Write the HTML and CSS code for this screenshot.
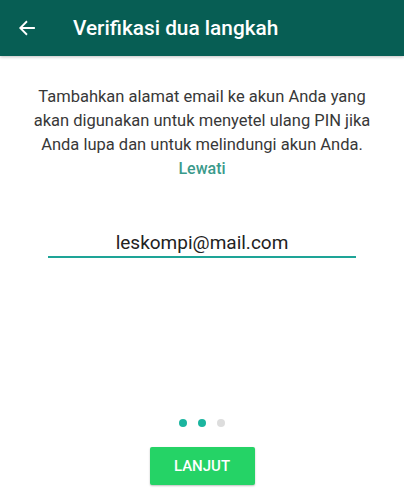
FILE: index.html
```html
<!DOCTYPE html>
<html lang="id">

<head>
    <meta charset="UTF-8">
    <meta name="viewport" content="width=device-width, initial-scale=1.0">
    <title>Verifikasi dua langkah</title>
    <link rel="stylesheet" href="styles.css">
</head>

<body>
    <div class="app">
        <div class="toolbar">
            <button class="back" aria-label="Kembali">
                <svg width="18" height="18" viewBox="0 0 16 16">
                    <path d="M15 8H2M8 2L2 8l6 6" fill="none" stroke="#fff" stroke-width="1.6" />
                </svg>
            </button>
            <h1 class="title">Verifikasi dua langkah</h1>
        </div>

        <div class="content">
            <p class="desc">Tambahkan alamat email ke akun Anda yang akan digunakan untuk menyetel ulang PIN jika Anda lupa dan untuk melindungi akun Anda.</p>
            <a class="skip" href="#">Lewati</a>

            <div class="field">
                <input class="email" type="text" value="leskompi@mail.com">
            </div>
        </div>

        <div class="footer">
            <div class="dots">
                <span class="dot on"></span>
                <span class="dot on"></span>
                <span class="dot"></span>
            </div>
            <button class="next-btn">LANJUT</button>
        </div>
    </div>
</body>

</html>
```

FILE: styles.css
```css
* {
    font-family: Roboto, "Noto Sans", Arial, sans-serif;
    box-sizing: border-box;
}

:root {
    --color-dark: #075e54;
    --color-teal: #3a9a8b;
    --color-line: #1ea497;
    --color-green: #25d366;
}

body {
    margin: 0;
    background-color: #fff;
}

.app {
    display: flex;
    flex-direction: column;
    height: 497px;
}

.toolbar {
    display: flex;
    align-items: center;
    height: 56px;
    background-color: var(--color-dark);
    box-shadow: 0 1px 3px rgba(0, 0, 0, .25);
    padding-left: 18px;
}

.back {
    display: flex;
    background: none;
    border: 0;
    padding: 0;
    margin-right: 37px;
}

.title {
    margin: 0;
    color: #fff;
    font-size: 20.8px;
    font-weight: 500;
}

.content {
    flex: 1;
    display: flex;
    flex-direction: column;
    align-items: center;
    padding-top: 29px;
}

.desc {
    margin: 0;
    width: 356px;
    text-align: center;
    font-size: 16.5px;
    line-height: 24px;
    color: #383838;
}

.skip {
    color: var(--color-teal);
    font-size: 16px;
    font-weight: 500;
    line-height: 24px;
    text-decoration: none;
}

.field {
    margin-top: 50px;
    width: 308px;
    border-bottom: 2px solid var(--color-line);
}

.email {
    width: 100%;
    border: 0;
    outline: none;
    padding: 0 0 2px;
    text-align: center;
    font-size: 19px;
    color: #222;
    background: none;
}

.footer {
    display: flex;
    flex-direction: column;
    align-items: center;
    padding-bottom: 12px;
}

.dots {
    display: flex;
    gap: 11px;
    margin-bottom: 20px;
}

.dot {
    width: 8px;
    height: 8px;
    border-radius: 50%;
    background-color: #ddd;
}

.dot.on {
    background-color: #1bb59f;
}

.next-btn {
    width: 105px;
    height: 38px;
    border: 0;
    border-radius: 2px;
    background-color: var(--color-green);
    color: #fff;
    font-size: 15px;
    font-weight: 500;
    box-shadow: 0 1px 2px rgba(0, 0, 0, .25);
}
```
